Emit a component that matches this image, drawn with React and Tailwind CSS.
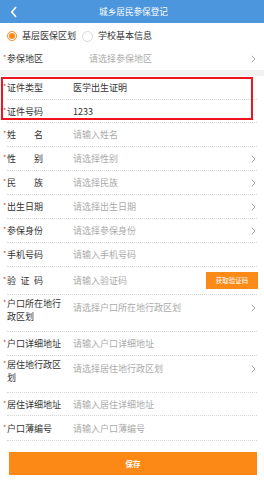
import React from 'react';

const font = "font-['Noto_Sans_CJK_SC','Noto_Sans',sans-serif]";

function Chevron() {
  return (
    <svg width="5" height="8" viewBox="0 0 5 8" className="shrink-0 mr-[1px]">
      <polyline points="0.8,0.8 4,4 0.8,7.2" fill="none" stroke="#9a9a9a" strokeWidth="0.9" />
    </svg>
  );
}

function Spread({ chars }) {
  return (
    <span className="flex w-[36px] justify-between">
      {chars.map((c) => (
        <span key={c}>{c}</span>
      ))}
    </span>
  );
}

function Row({ label, spread, value, placeholder, arrow, h = 'h-[24px]', multi, children, labelW = 'w-[66px]' }) {
  return (
    <div className={`flex ${multi ? 'items-start pt-[2px]' : 'items-center'} ${h} mx-[7px] border-b border-dotted border-[#d6d6d6]`}>
      <span className={`flex shrink-0 ${labelW} text-[#333] leading-[13px]`}>
        <span className="-ml-[4px] w-[4px] text-[#e2342d] text-[7px] leading-[10px]">*</span>
        {spread ? <Spread chars={spread} /> : <span className={multi ? 'w-[56px]' : ''}>{label}</span>}
      </span>
      <span className={`flex-1 leading-[13px] ${value ? 'text-[#333]' : 'text-[#ababab]'} ${multi ? 'pt-[4px]' : ''}`}>
        {value || placeholder}
      </span>
      {children}
      {arrow && (
        <span className={multi ? 'pt-[7px]' : ''}>
          <Chevron />
        </span>
      )}
    </div>
  );
}

export default function App() {
  return (
    <div className={`w-[264px] h-[486px] bg-white text-[9px] ${font} overflow-hidden`}>
      {/* header */}
      <div className="h-[23px] bg-[#4b96dc] flex items-center relative">
        <svg width="8" height="12" viewBox="0 0 8 12" className="absolute left-[10px] top-[6px]">
          <polyline points="6,1 1.8,6 6,11" fill="none" stroke="#fff" strokeWidth="1.6" />
        </svg>
        <span className="flex-1 text-center text-white text-[8.6px] pl-[3px]">城乡居民参保登记</span>
      </div>

      {/* radios */}
      <div className="h-[25px] flex items-center pl-[7px] pt-[1px]">
        <span className="w-[10px] h-[10px] rounded-full border border-[#fb8a18] flex items-center justify-center">
          <span className="w-[6px] h-[6px] rounded-full bg-[#fb8a18]" />
        </span>
        <span className="ml-[5px] text-[#333]">基层医保区划</span>
        <span className="ml-[6px] w-[11px] h-[11px] rounded-full border border-[#d9d9d9]" />
        <span className="ml-[5px] text-[#333]">学校基本信息</span>
      </div>

      <div className="h-[22px] flex items-center mx-[7px]">
        <span className="flex shrink-0 w-[82px] text-[#333]">
          <span className="-ml-[4px] w-[4px] text-[#e2342d] text-[7px] leading-[10px]">*</span>
          参保地区
        </span>
        <span className="flex-1 text-[#ababab]">请选择参保地区</span>
        <Chevron />
      </div>

      <div className="h-[6px] bg-[#f1f1f1]" />

      {/* highlighted id rows */}
      <div className="relative">
        <Row label="证件类型" value="医学出生证明" />
        <Row label="证件号码" value="1233" h="h-[23px]" />
        <div className="absolute left-[1px] top-[1px] w-[252px] h-[43px] border-2 border-[#f0141e] pointer-events-none" />
      </div>

      <Row spread={['姓', '名']} placeholder="请输入姓名" />
      <Row spread={['性', '别']} placeholder="请选择性别" arrow />
      <Row spread={['民', '族']} placeholder="请选择民族" arrow />
      <Row label="出生日期" placeholder="请选择出生日期" arrow />
      <Row label="参保身份" placeholder="请选择参保身份" arrow />
      <Row label="手机号码" placeholder="请输入手机号码" />
      <Row spread={['验', '证', '码']} placeholder="请输入验证码" h="h-[28px]">
        <button className="w-[52px] h-[17px] -mr-[1px] bg-[#fb8a18] text-white text-[6.5px] leading-[17px] text-center">
          获取验证码
        </button>
      </Row>
      <Row label="户口所在地行政区划" placeholder="请选择户口所在地行政区划" arrow multi h="h-[37px]" />
      <Row label="户口详细地址" placeholder="请输入户口详细地址" />
      <Row label="居住地行政区划" placeholder="请选择居住地行政区划" arrow multi h="h-[37px]" />
      <Row label="居住详细地址" placeholder="请输入居住详细地址" h="h-[23px]" />
      <Row label="户口薄编号" placeholder="请输入户口薄编号" h="h-[25px]" />

      <div className="px-[9px] pt-[11px]">
        <button className="w-[248px] h-[23px] bg-[#fc8916] text-white text-[7.5px] font-bold">保存</button>
      </div>
    </div>
  );
}
